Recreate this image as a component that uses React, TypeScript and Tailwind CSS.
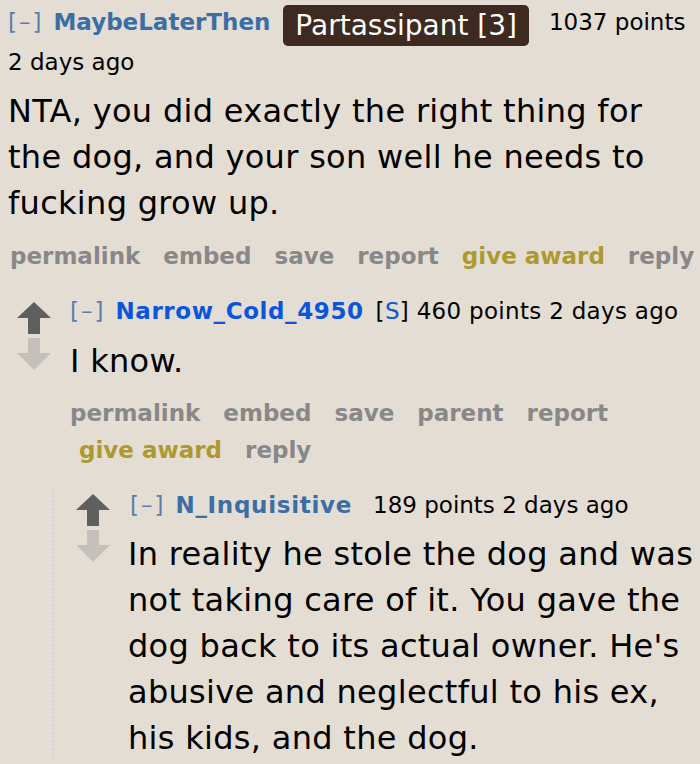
import React from "react";

const font = { fontFamily: '"DejaVu Sans", Verdana, sans-serif' };

const Arrows = () => (
  <div className="flex flex-col items-center w-[34px] shrink-0">
    <svg width="34" height="32" viewBox="0 0 34 32">
      <path d="M17 0 L34 16 L23 16 L23 32 L11 32 L11 16 L0 16 Z" fill="#5f5f5f" />
    </svg>
    <svg width="34" height="32" viewBox="0 0 34 32" className="mt-[4px]">
      <path d="M11 0 L23 0 L23 15 L34 15 L17 32 L0 15 L11 15 Z" fill="#c4c1bd" />
    </svg>
  </div>
);

const Actions = ({ items }: { items: string[] }) => (
  <div className="flex flex-wrap gap-x-[23px] text-[23px] font-bold leading-[37px] text-[#888888]">
    {items.map((a) => (
      <span key={a} className={a === "give award" ? "text-[#ad9a2f]" : ""}>
        {a}
      </span>
    ))}
  </div>
);

const Collapse = () => <span className="text-[#5a7fae] mr-[10px] tracking-[2px]">[–]</span>;

export default function App() {
  return (
    <div style={font} className="w-[700px] h-[764px] overflow-hidden bg-[#e4ddd4] text-black">
      {/* top comment */}
      <div className="pl-[8px]">
        <div className="flex flex-wrap items-start text-[23px] leading-[34px] pt-[5px]">
          <Collapse />
          <span className="text-[#3a6ea5] font-bold mr-[13px]">MaybeLaterThen</span>
          <span className="bg-[#3e2a20] text-white rounded-[5px] px-[12px] text-[28px] leading-[41px] mr-[20px]">
            Partassipant [3]
          </span>
          <span>1037 points</span>
          <span className="w-full leading-[32px]">2 days ago</span>
        </div>
        <div className="text-[32px] leading-[46px] tracking-[0.3px] mt-[10px] pr-[10px]">
          NTA, you did exactly the right thing for the dog, and your son well he needs to fucking grow up.
        </div>
        <div className="mt-[12px] ml-[2px]">
          <Actions items={["permalink", "embed", "save", "report", "give award", "reply"]} />
        </div>
      </div>

      {/* second comment */}
      <div className="flex pl-[17px] mt-[20px]">
        <div className="pt-[7px]">
          <Arrows />
        </div>
        <div className="flex-1 pl-[19px]">
          <div className="text-[23px] leading-[32px]">
            <Collapse />
            <span className="text-[#0a55dc] font-bold mr-[12px] tracking-[0.6px]">Narrow_Cold_4950</span>
            <span className="tracking-[0.3px]">[<span className="text-[#0a55dc]">S</span>] 460 points 2 days ago</span>
          </div>
          <div className="text-[32px] leading-[46px] tracking-[0.3px] mt-[11px]">I know.</div>
          <div className="mt-[11px]">
            <Actions items={["permalink", "embed", "save", "parent", "report"]} />
            <div className="pl-[9px]">
              <Actions items={["give award", "reply"]} />
            </div>
          </div>

          {/* third comment */}
          <div className="flex -ml-[18px] mt-[20px] border-l-2 border-dotted border-[#d0d0ee]">
            <div className="pl-[22px] pt-[5px]">
              <Arrows />
            </div>
            <div className="flex-1 pl-[18px]">
              <div className="text-[23px] leading-[32px] pl-[2px]">
                <Collapse />
                <span className="text-[#3a6ea5] font-bold mr-[21px] tracking-[0.7px]">N_Inquisitive</span>
                <span>189 points 2 days ago</span>
              </div>
              <div className="text-[32px] leading-[46px] tracking-[0.3px] mt-[10px]">
                In reality he stole the dog and was not taking care of it. You gave the dog back to its actual owner. He's abusive and neglectful to his ex, his kids, and the dog.
              </div>
            </div>
          </div>
        </div>
      </div>
    </div>
  );
}
